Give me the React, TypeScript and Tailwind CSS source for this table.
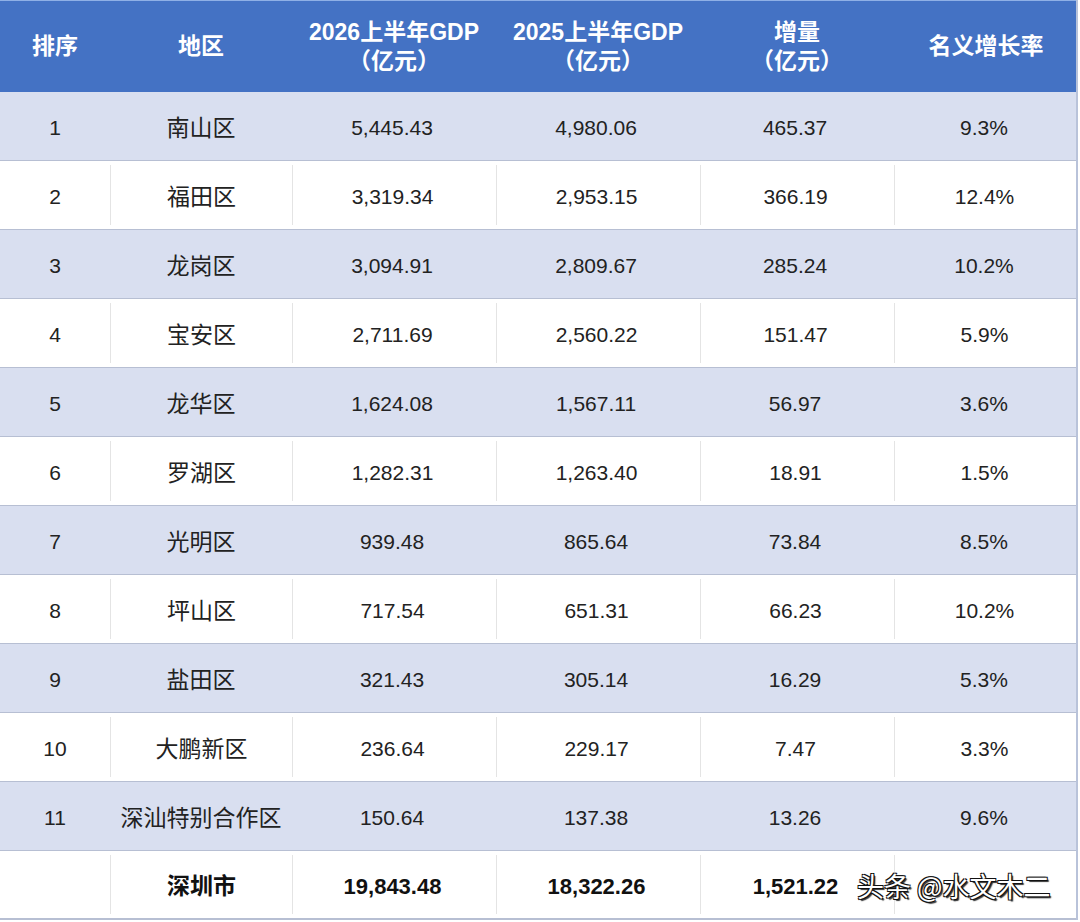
const rows: [string, string, string, string, string, string][] = [
  ["1", "南山区", "5,445.43", "4,980.06", "465.37", "9.3%"],
  ["2", "福田区", "3,319.34", "2,953.15", "366.19", "12.4%"],
  ["3", "龙岗区", "3,094.91", "2,809.67", "285.24", "10.2%"],
  ["4", "宝安区", "2,711.69", "2,560.22", "151.47", "5.9%"],
  ["5", "龙华区", "1,624.08", "1,567.11", "56.97", "3.6%"],
  ["6", "罗湖区", "1,282.31", "1,263.40", "18.91", "1.5%"],
  ["7", "光明区", "939.48", "865.64", "73.84", "8.5%"],
  ["8", "坪山区", "717.54", "651.31", "66.23", "10.2%"],
  ["9", "盐田区", "321.43", "305.14", "16.29", "5.3%"],
  ["10", "大鹏新区", "236.64", "229.17", "7.47", "3.3%"],
  ["11", "深汕特别合作区", "150.64", "137.38", "13.26", "9.6%"],
];

const cols = "grid grid-cols-[110px_182px_204px_204px_194px_184px]";
const font = { fontFamily: '"Liberation Sans", "Noto Sans CJK SC", sans-serif' };

export default function App() {
  return (
    <div className="relative w-[1080px] h-[922px] bg-white overflow-hidden text-[#222]" style={font}>
      <div className="w-[1078px] border-r-2 border-[#b9c3da]">
        {/* header */}
        <div className={`${cols} h-[92px] bg-[#4472c4] border-t border-[#8fb0e6] text-white text-[23px] font-semibold leading-[29px]`}>
          <div className="flex items-center justify-center">排序</div>
          <div className="flex items-center justify-center">地区</div>
          <div className="flex flex-col items-center justify-center">
            <span>2026上半年GDP</span>
            <span>（亿元）</span>
          </div>
          <div className="flex flex-col items-center justify-center">
            <span>2025上半年GDP</span>
            <span>（亿元）</span>
          </div>
          <div className="flex flex-col items-center justify-center">
            <span>增量</span>
            <span>（亿元）</span>
          </div>
          <div className="flex items-center justify-center">名义增长率</div>
        </div>

        {rows.map((r, i) => {
          const shaded = i % 2 === 0;
          return (
            <div
              key={r[0]}
              className={`${cols} h-[69px] border-b border-[#b7bfd3] text-[21px] ${shaded ? "bg-[#d9dff0]" : "bg-white"}`}
            >
              {r.map((c, j) => (
                <div
                  key={j}
                  className={`flex items-center justify-center pt-1 ${j > 1 ? "pr-1" : ""} ${j === 1 ? "text-[23px]" : ""} ${!shaded && j > 0 ? "border-l border-[#e4e4e4] my-1" : ""}`}
                >
                  {c}
                </div>
              ))}
            </div>
          );
        })}

        {/* total */}
        <div className={`${cols} h-[69px] border-b-2 border-[#b7bfd3] text-[22px] font-bold text-[#111]`}>
          <div />
          <div className="flex items-center justify-center pt-1 border-l border-[#e4e4e4] my-1 text-[23px]">深圳市</div>
          <div className="flex items-center justify-center pt-1 border-l border-[#e4e4e4] my-1 pr-1">19,843.48</div>
          <div className="flex items-center justify-center pt-1 border-l border-[#e4e4e4] my-1 pr-1">18,322.26</div>
          <div className="flex items-center justify-center pt-1 border-l border-[#e4e4e4] my-1 pr-1">1,521.22</div>
          <div className="flex items-center justify-center border-l border-[#e4e4e4] my-1" />
        </div>
      </div>

      {/* watermark */}
      <div
        className="absolute left-[857px] top-[866px] text-[27px] text-white whitespace-nowrap"
        style={{ fontFamily: '"Noto Sans CJK SC", sans-serif', textShadow: "1px 1px 0 #111, -1px -1px 0 #111, 1px -1px 0 #111, -1px 1px 0 #111, 2px 2px 1px #333" }}
      >
        头条 @水文木二
      </div>
    </div>
  );
}
